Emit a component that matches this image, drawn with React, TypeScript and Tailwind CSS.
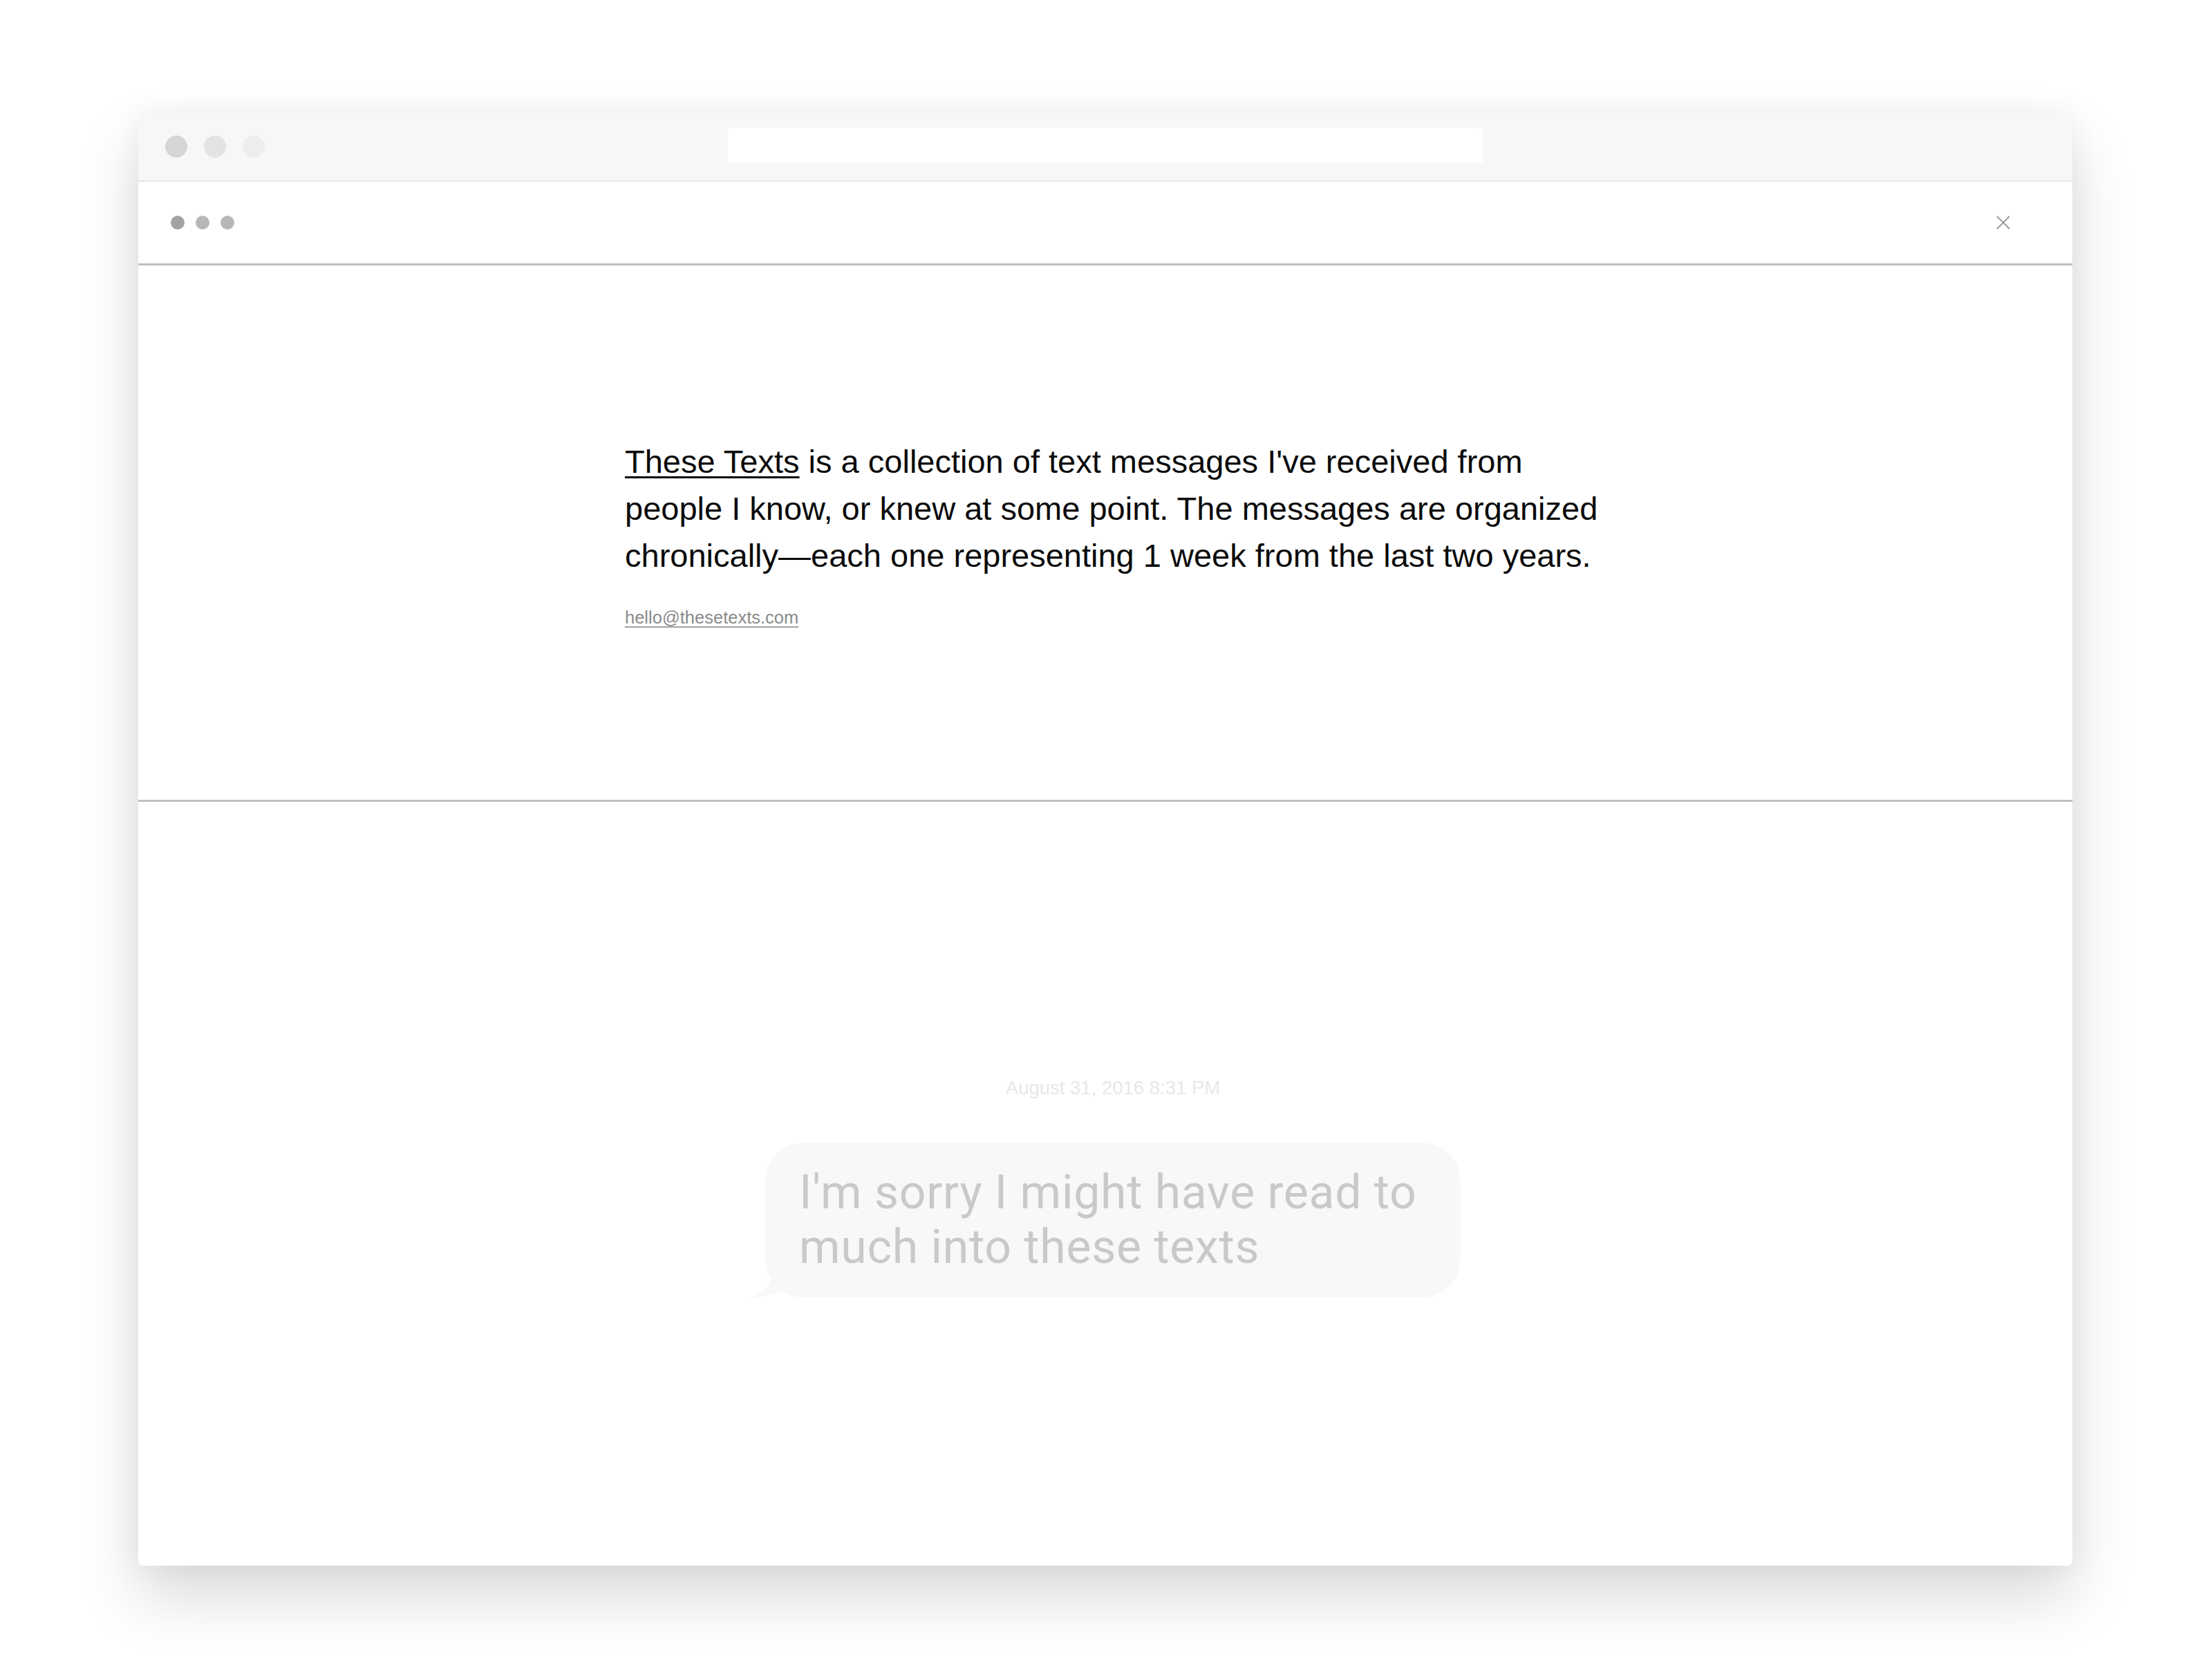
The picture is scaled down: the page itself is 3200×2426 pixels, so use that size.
import React from 'react';

const TrafficLights = () => (
  <div className="flex items-center gap-[24px] pl-[39px]">
    <span className="block w-[32px] h-[32px] rounded-full bg-[#d6d6d6]" />
    <span className="block w-[32px] h-[32px] rounded-full bg-[#e3e3e3]" />
    <span className="block w-[32px] h-[32px] rounded-full bg-[#ededed]" />
  </div>
);

const CloseIcon = () => (
  <svg width="22" height="22" viewBox="0 0 22 22" fill="none">
    <path d="M2 2L20 20M20 2L2 20" stroke="#9b9b9b" strokeWidth="2" />
  </svg>
);

const BubbleTail = () => (
  <svg
    className="absolute left-[-22px] bottom-0"
    width="74"
    height="60"
    viewBox="0 0 74 60"
    fill="#f8f8fa"
  >
    <path d="M30 0 L30 28 C30 44 18 55 0 60 C24 60 40 55 52 45 L74 45 L74 0 Z" />
  </svg>
);

const App: React.FC = () => {
  return (
    <div className="w-[3200px] h-[2426px] bg-white pt-[163px] pl-[200px]">
      <div className="w-[2798px] h-[2102px] bg-white rounded-[8px] overflow-hidden flex flex-col shadow-[0_45px_90px_rgba(0,0,0,0.15),0_0_40px_rgba(0,0,0,0.05)]">
        {/* Browser chrome */}
        <div className="h-[100px] shrink-0 bg-[#f7f7f7] border-b-2 border-[#e6e6e6] grid grid-cols-[1fr_1092px_1fr] items-center">
          <TrafficLights />
          <div className="h-[51px] -mt-[4px] rounded-[6px] bg-white" />
          <div />
        </div>

        {/* Toolbar */}
        <div className="h-[121px] shrink-0 flex items-center justify-between pl-[47px] pr-[89px] border-b-[3px] border-[#bfbfbf]">
          <div className="flex items-center gap-[16px]">
            <span className="block w-[20px] h-[20px] rounded-full bg-[#a2a2a2]" />
            <span className="block w-[20px] h-[20px] rounded-full bg-[#b7b7ba]" />
            <span className="block w-[20px] h-[20px] rounded-full bg-[#b7b7ba]" />
          </div>
          <CloseIcon />
        </div>

        {/* About */}
        <div
          className="h-[776px] shrink-0 flex flex-col items-center justify-center pl-[30px] border-b-[3px] border-[#bfbfbf]"
          style={{ fontFamily: '"Liberation Sans", Arial, sans-serif' }}
        >
          <div className="w-[1420px]">
            <p className="text-[47px] leading-[68px] text-[#0a0a0a]">
              <a href="#" className="underline decoration-[3px] underline-offset-[5px]">
                These Texts
              </a>{' '}
              is a collection of text messages I've received from people I know, or knew at some
              point. The messages are organized chronically—each one representing 1 week from the
              last two years.
            </p>
            <a
              href="#"
              className="block mt-[40px] text-[25.5px] leading-[30px] text-[#8a8a8a] underline decoration-[#a0a0a0] underline-offset-[4px]"
            >
              hello@thesetexts.com
            </a>
          </div>
        </div>

        {/* Message */}
        <div className="flex-1 flex flex-col items-center justify-center pl-[22px] pt-[8px]">
          <div
            className="text-[27.5px] leading-[34px] text-[#e8e8e8]"
            style={{ fontFamily: '"Liberation Sans", Arial, sans-serif' }}
          >
            August 31, 2016 8:31 PM
          </div>
          <div className="relative mt-[62px] w-[1006px]">
            <BubbleTail />
            <div
              className="relative rounded-[56px] bg-[#f8f8fa] px-[49px] py-[33px] text-[68px] leading-[79px] tracking-[0.7px] text-[#c9c9cb]"
              style={{ fontFamily: 'Roboto, "Noto Sans", sans-serif' }}
            >
              I'm sorry I might have read to much into these texts
            </div>
          </div>
        </div>
      </div>
    </div>
  );
};

export default App;
